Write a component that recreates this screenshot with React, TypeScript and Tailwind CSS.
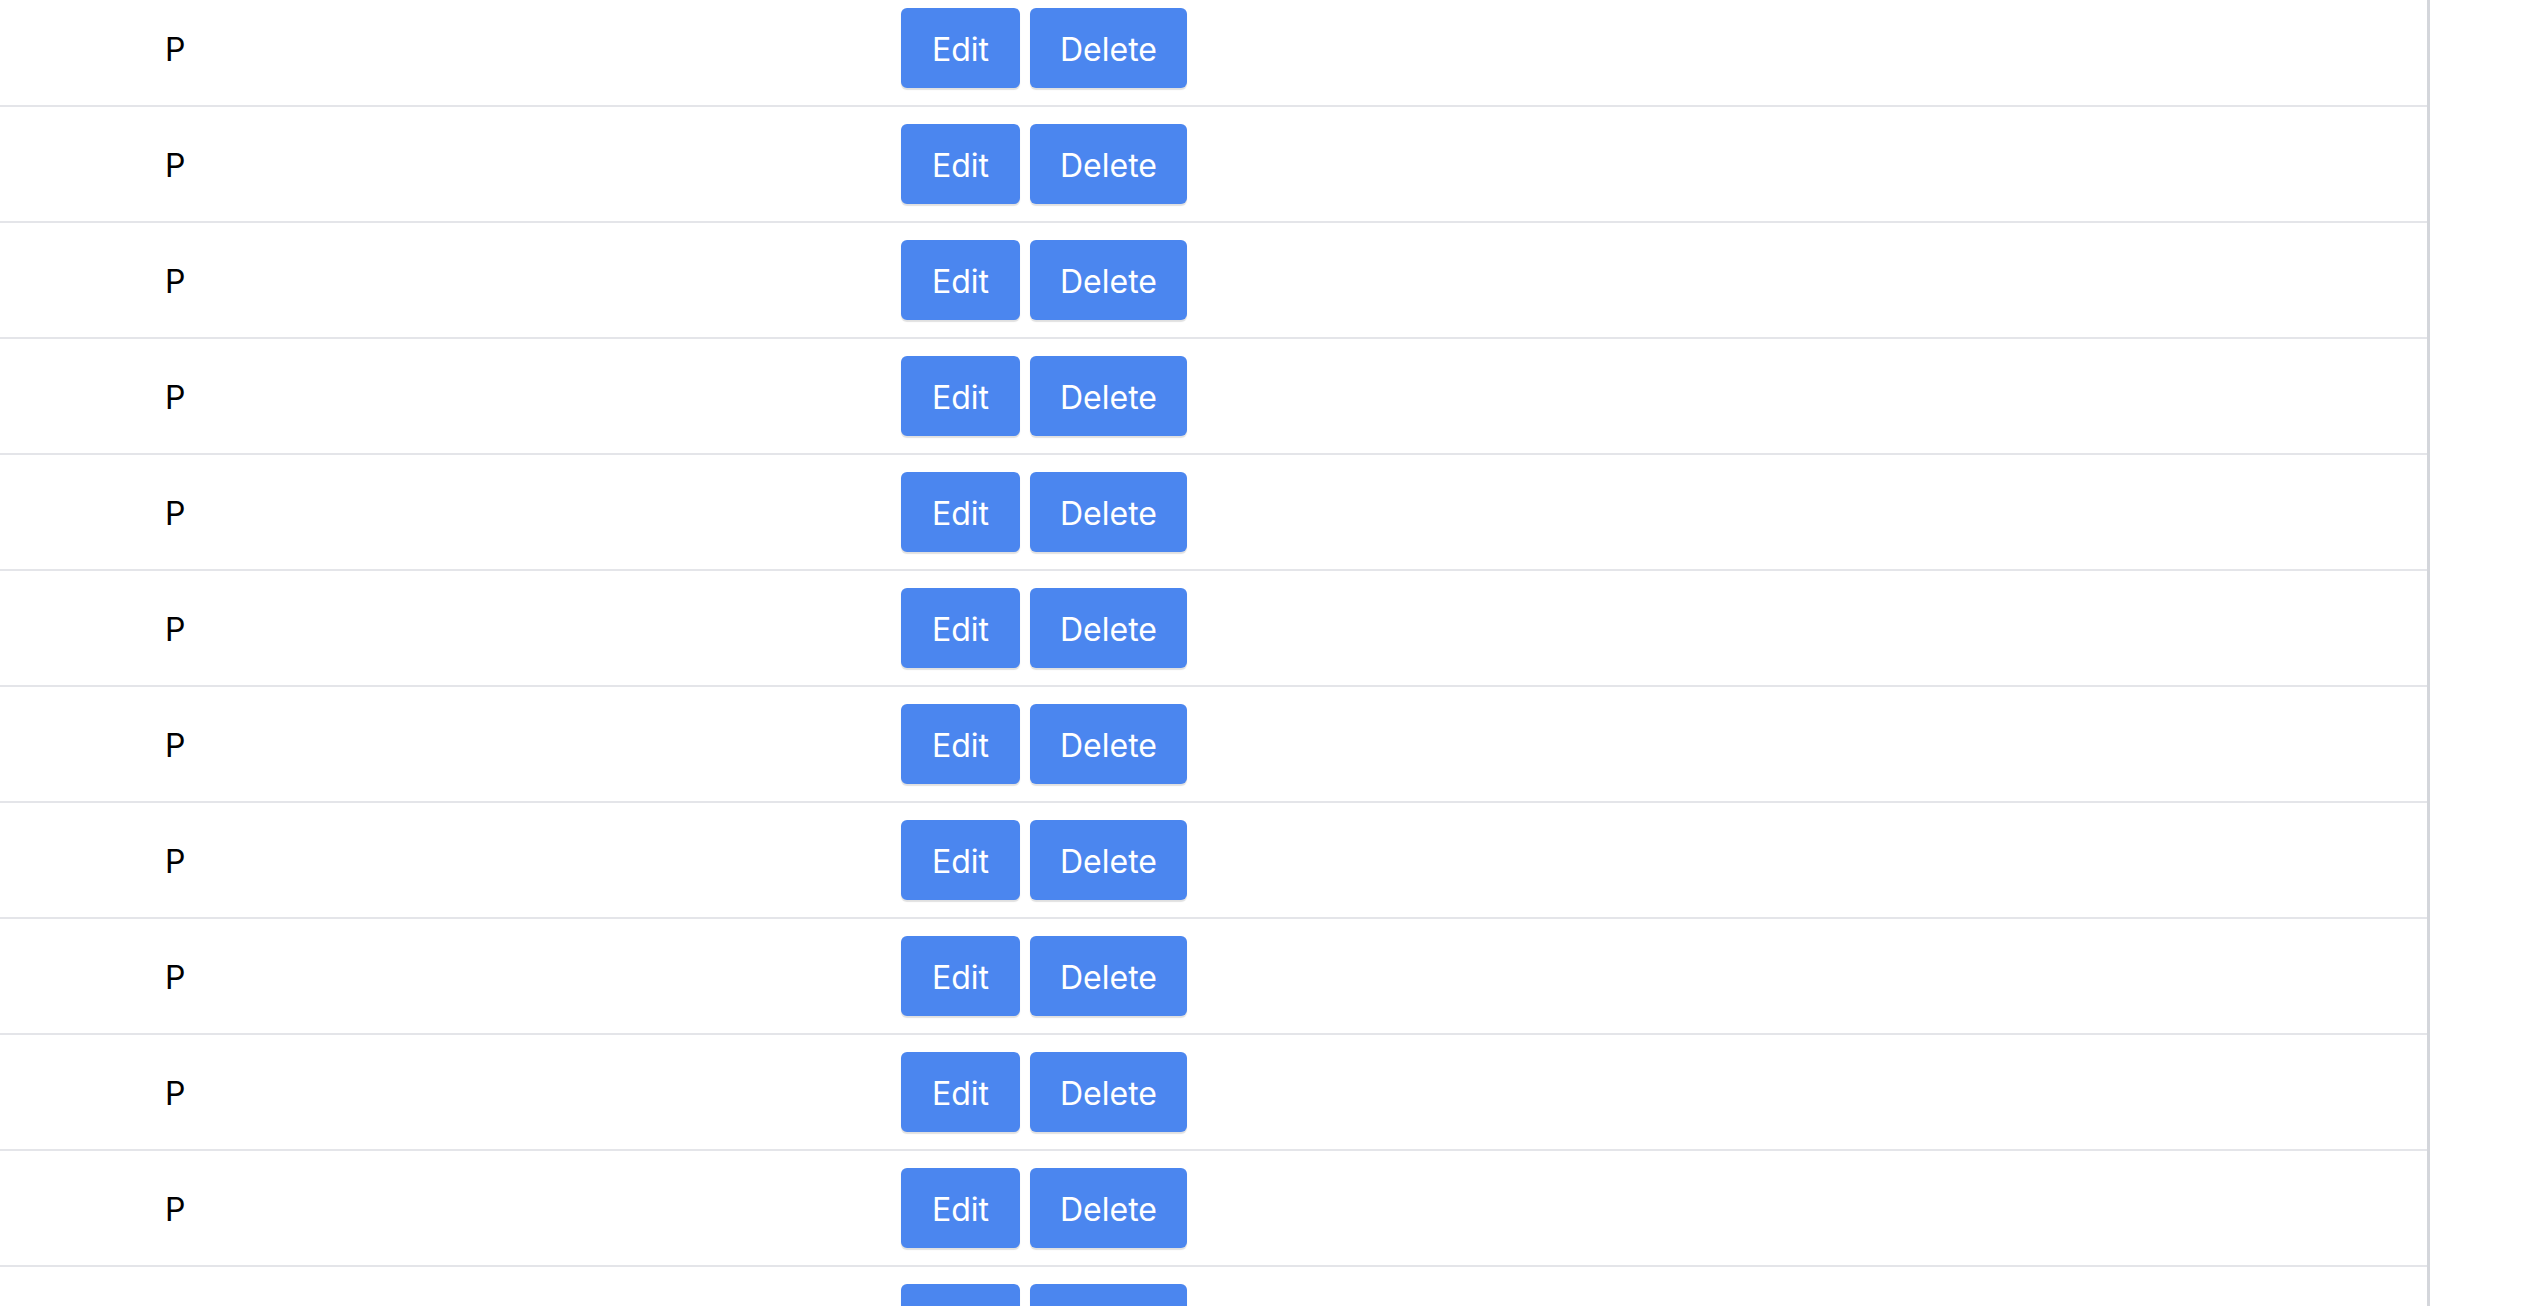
const rows = Array.from({ length: 12 }, (_, i) => ({ id: i + 1, name: "P" }));

export default function App() {
  return (
    <div className="h-[1306px] overflow-hidden bg-white" style={{ fontFamily: "Inter, 'Liberation Sans', sans-serif" }}>
      <div className="mt-[-9px] w-[2430px] border-r-[3px] border-[#d4d6db]">
        {rows.map((row) => (
          <div key={row.id} className="flex h-[116px] items-center border-b-2 border-[#e4e5e9]">
            <div className="w-[901px] shrink-0 pl-[165px] pt-[3px] text-[32px] text-black">{row.name}</div>
            <div className="flex gap-[10px]">
              <button className="h-[80px] w-[119px] rounded-[6px] bg-[#4b86ef] pt-[3px] text-[32px] text-white shadow-[0_2px_1px_rgba(0,0,0,0.12)]">
                Edit
              </button>
              <button className="h-[80px] w-[157px] rounded-[6px] bg-[#4b86ef] pt-[3px] text-[32px] text-white shadow-[0_2px_1px_rgba(0,0,0,0.12)]">
                Delete
              </button>
            </div>
          </div>
        ))}
      </div>
    </div>
  );
}
